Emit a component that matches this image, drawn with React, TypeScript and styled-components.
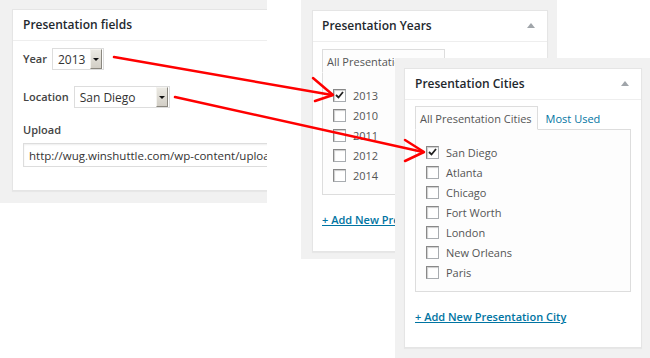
import React from "react"
import styled, { createGlobalStyle } from "styled-components"

const GlobalStyle = createGlobalStyle`
  body {
    margin: 0;
    background: #fff;
    font-family: "Open Sans", "Liberation Sans", sans-serif;
    color: #555;
  }
`

const Canvas = styled.div`
  position: relative;
  width: 650px;
  height: 358px;
  overflow: hidden;
  background: #fff;
`

// each screenshot in the collage sits at its own spot on the canvas
const Shot = styled.div<{ $x: number; $y: number; $w: number; $h: number; $pl: number; $pt: number }>`
  position: absolute;
  z-index: 0;
  left: ${(p) => p.$x}px;
  top: ${(p) => p.$y}px;
  width: ${(p) => p.$w}px;
  height: ${(p) => p.$h}px;
  padding: ${(p) => p.$pt}px 0 0 ${(p) => p.$pl}px;
  box-sizing: border-box;
  background: #f1f1f1;
  overflow: hidden;
`

const Postbox = styled.div<{ $w: number; $h: number }>`
  width: ${(p) => p.$w}px;
  height: ${(p) => p.$h}px;
  box-sizing: border-box;
  background: #fff;
  border: 1px solid #e5e5e5;
  box-shadow: 0 1px 1px rgba(0, 0, 0, 0.04);
  display: flex;
  flex-direction: column;
`

const BoxHeader = styled.div<{ $pl: number }>`
  height: 31px;
  box-sizing: border-box;
  border-bottom: 1px solid #eee;
  display: flex;
  align-items: center;
  justify-content: space-between;
  padding: 0 12px 1px ${(p) => p.$pl}px;
  font-size: 12px;
  font-weight: 600;
  color: #23282d;
`

const Toggle = styled.span`
  width: 0;
  height: 0;
  border-left: 4px solid transparent;
  border-right: 4px solid transparent;
  border-bottom: 5px solid #a0a5aa;
`

const Inside = styled.div<{ $pl: number; $pt: number }>`
  padding: ${(p) => p.$pt}px 10px 0 ${(p) => p.$pl}px;
  display: flex;
  flex-direction: column;
`

const FieldRow = styled.div<{ $mt?: number }>`
  display: flex;
  align-items: center;
  gap: 5px;
  height: 22px;
  margin-top: ${(p) => p.$mt ?? 0}px;
`

const Label = styled.span<{ $mt?: number }>`
  font-size: 11px;
  font-weight: 600;
  color: #444;
  line-height: 18px;
  margin-top: ${(p) => p.$mt ?? 0}px;
`

const Select = styled.div<{ $w: number }>`
  width: ${(p) => p.$w}px;
  height: 22px;
  box-sizing: border-box;
  border: 1px solid #ddd;
  display: flex;
  align-items: center;
  justify-content: space-between;
  padding: 0 1px 0 5px;
  font-size: 12px;
  color: #333;
`

const DropButton = styled.span`
  width: 12px;
  height: 20px;
  box-sizing: border-box;
  background: linear-gradient(#ebe9e3, #d2cec6);
  border: 1px solid;
  border-color: #f4f3ef #8a877f #8a877f #f4f3ef;
  display: flex;
  align-items: center;
  justify-content: center;

  &::after {
    content: "";
    border-left: 3px solid transparent;
    border-right: 3px solid transparent;
    border-top: 3px solid #111;
  }
`

const TextInput = styled.div`
  margin-top: 4px;
  width: 270px;
  height: 24px;
  box-sizing: border-box;
  border: 1px solid #ddd;
  box-shadow: inset 0 1px 2px rgba(0, 0, 0, 0.07);
  padding: 0 5px;
  display: flex;
  align-items: center;
  font-size: 11.5px;
  color: #333;
  white-space: nowrap;
  overflow: hidden;
`

const Tabs = styled.div`
  display: flex;
  align-items: flex-end;
  height: 24px;
  margin-bottom: -1px;
  white-space: nowrap;
`

const Tab = styled.span<{ $active?: boolean }>`
  height: 24px;
  box-sizing: border-box;
  display: flex;
  align-items: center;
  padding: 0 5px 0 4px;
  margin-right: 3px;
  font-size: 11px;
  color: ${(p) => (p.$active ? "#555" : "#0074a2")};
  background: ${(p) => (p.$active ? "#fdfdfd" : "transparent")};
  border: 1px solid ${(p) => (p.$active ? "#ddd" : "transparent")};
  border-bottom-color: ${(p) => (p.$active ? "#fdfdfd" : "transparent")};
  position: relative;
  z-index: 1;
`

const CheckList = styled.ul`
  list-style: none;
  margin: 0;
  padding: 12px 0 9px 10px;
  border: 1px solid #ddd;
  background: #fdfdfd;
`

const CheckItem = styled.li`
  height: 20px;
  display: flex;
  align-items: center;
  gap: 7px;
  font-size: 11px;
  color: #555;
`

const Box = styled.span`
  width: 13px;
  height: 13px;
  box-sizing: border-box;
  border: 1px solid #a8acb0;
  border-top-color: #888;
  border-left-color: #888;
  background: #fff;
  box-shadow: inset 1px 1px 1px rgba(0, 0, 0, 0.2);
  display: flex;
  align-items: center;
  justify-content: center;
`

const AddLink = styled.a`
  margin-top: 15px;
  line-height: 20px;
  font-size: 11px;
  font-weight: 600;
  color: #0074a2;
  text-decoration: underline;
  white-space: nowrap;
`

const Arrows = styled.svg`
  position: absolute;
  z-index: 1;
  left: 0;
  top: 0;
  pointer-events: none;
`

const Check = ({ checked }: { checked?: boolean }) => (
  <Box>
    {checked && (
      <svg width="9" height="8" viewBox="0 0 9 8">
        <path d="M1 4 L3.5 6.5 L8 1" fill="none" stroke="#222" strokeWidth="1.8" />
      </svg>
    )}
  </Box>
)

const years = ["2013", "2010", "2011", "2012", "2014"]
const cities = ["San Diego", "Atlanta", "Chicago", "Fort Worth", "London", "New Orleans", "Paris"]

export default function App() {
  return (
    <>
      <GlobalStyle />
      <Canvas>
        <Shot $x={0} $y={0} $w={267} $h={203} $pl={12} $pt={9}>
          <Postbox $w={300} $h={182}>
            <BoxHeader $pl={10}>Presentation fields</BoxHeader>
            <Inside $pl={10} $pt={7}>
              <FieldRow>
                <Label>Year</Label>
                <Select $w={52}>
                  2013
                  <DropButton />
                </Select>
              </FieldRow>
              <FieldRow $mt={16}>
                <Label>Location</Label>
                <Select $w={96}>
                  San Diego
                  <DropButton />
                </Select>
              </FieldRow>
              <Label $mt={13}>Upload</Label>
              <TextInput>http://wug.winshuttle.com/wp-content/uploads/2013/05/presentation.pdf</TextInput>
            </Inside>
          </Postbox>
        </Shot>

        <Shot $x={301} $y={0} $w={256} $h={259} $pl={11} $pt={10}>
          <Postbox $w={236} $h={242}>
            <BoxHeader $pl={9}>
              Presentation Years
              <Toggle />
            </BoxHeader>
            <Inside $pl={9} $pt={7}>
              <Tabs>
                <Tab $active>All Presentation Years</Tab>
                <Tab>Most Used</Tab>
              </Tabs>
              <CheckList>
                {years.map((y, i) => (
                  <CheckItem key={y}>
                    <Check checked={i === 0} />
                    {y}
                  </CheckItem>
                ))}
              </CheckList>
              <AddLink>+ Add New Presentation Year</AddLink>
            </Inside>
          </Postbox>
        </Shot>

        <Shot $x={395} $y={58} $w={255} $h={300} $pl={9} $pt={10}>
          <Postbox $w={238} $h={280}>
            <BoxHeader $pl={10}>
              Presentation Cities
              <Toggle />
            </BoxHeader>
            <Inside $pl={10} $pt={6}>
              <Tabs>
                <Tab $active>All Presentation Cities</Tab>
                <Tab>Most Used</Tab>
              </Tabs>
              <CheckList>
                {cities.map((c, i) => (
                  <CheckItem key={c}>
                    <Check checked={i === 0} />
                    {c}
                  </CheckItem>
                ))}
              </CheckList>
              <AddLink>+ Add New Presentation City</AddLink>
            </Inside>
          </Postbox>
        </Shot>

        <Arrows width="650" height="358" viewBox="0 0 650 358">
          <g fill="none" stroke="#f00" strokeWidth="2.5" strokeLinecap="round" strokeLinejoin="round">
            <path d="M114 57 L332 95" />
            <path d="M313 78 L333 95 L315 101" />
            <path d="M175 97 L423 152" />
            <path d="M405 140 L424 152 L405 161" />
          </g>
        </Arrows>
      </Canvas>
    </>
  )
}
